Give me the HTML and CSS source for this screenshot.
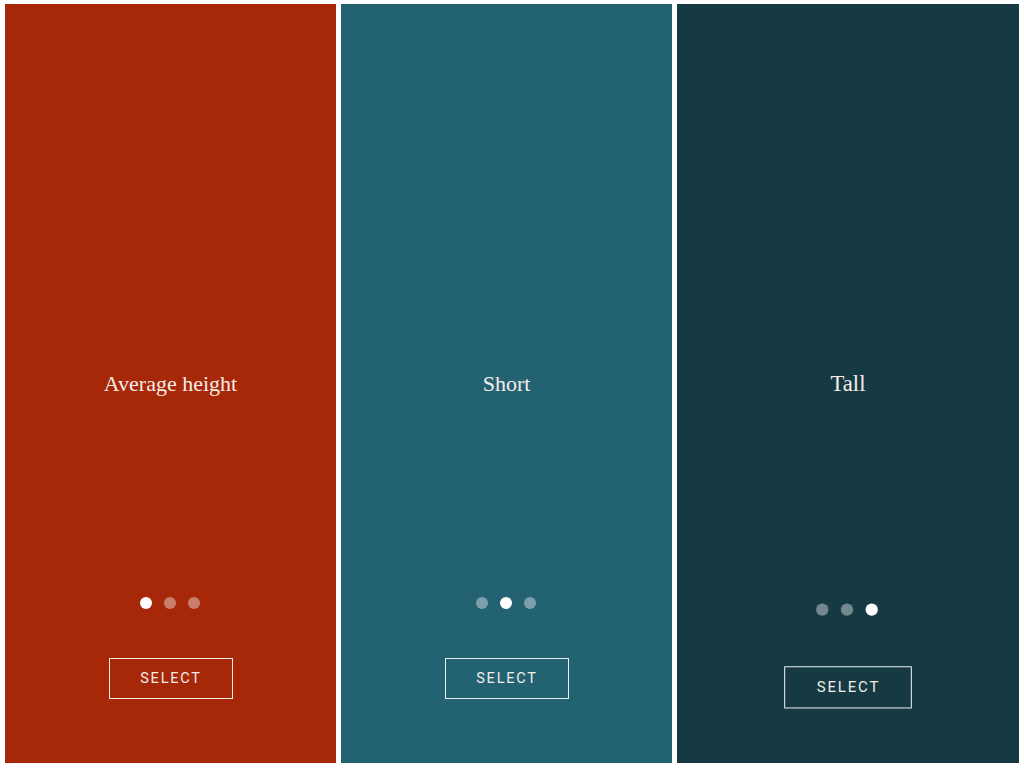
FILE: index.html
```html
<!DOCTYPE html>
<html>
<head>
<meta charset="utf-8">
<link rel="stylesheet" href="styles.css">
</head>
<body>
<div class="deck">
  <section class="panel panel-red">
    <div class="inner">
      <div class="top"></div>
      <h2 class="title">Average height</h2>
      <div class="bottom">
        <div class="dots"><span class="dot on"></span><span class="dot"></span><span class="dot"></span></div>
        <button class="select">SELECT</button>
      </div>
    </div>
  </section>
  <section class="panel panel-teal">
    <div class="inner">
      <div class="top"></div>
      <h2 class="title">Short</h2>
      <div class="bottom">
        <div class="dots"><span class="dot"></span><span class="dot on"></span><span class="dot"></span></div>
        <button class="select">SELECT</button>
      </div>
    </div>
  </section>
  <section class="panel panel-dark active">
    <div class="inner">
      <div class="top"></div>
      <h2 class="title">Tall</h2>
      <div class="bottom">
        <div class="dots"><span class="dot"></span><span class="dot"></span><span class="dot on"></span></div>
        <button class="select">SELECT</button>
      </div>
    </div>
  </section>
</div>
</body>
</html>
```
FILE: styles.css
```css
html, body {
  margin: 0;
  padding: 0;
  background: #ffffff;
}
.deck {
  display: flex;
  gap: 5px;
  padding: 4px 5px 5px 5px;
  height: 768px;
  box-sizing: border-box;
}
.panel {
  width: 331px;
  flex: 0 0 331px;
  height: 759px;
  overflow: hidden;
  color: #ffffff;
}
.panel.active {
  flex: 1 1 auto;
}
.panel-red { background: #a62809; }
.panel-teal { background: #236271; }
.panel-dark { background: #163a44; }
.inner {
  height: 100%;
  display: grid;
  grid-template-rows: 1fr auto 1fr;
}
.active .inner {
  transform: scale(1.03);
  transform-origin: 50% 50%;
}
.title {
  margin: 0;
  text-align: center;
  font-family: "Liberation Serif", "DejaVu Serif", serif;
  font-weight: normal;
  font-size: 22px;
  line-height: 30px;
  color: #f6ece8;
}
.bottom {
  display: flex;
  flex-direction: column;
  align-items: center;
  justify-content: flex-end;
  padding-bottom: 64px;
}
.dots {
  display: flex;
  gap: 12px;
  margin-bottom: 49px;
  margin-left: -2px;
}
.dot {
  width: 12px;
  height: 12px;
  border-radius: 50%;
  background: rgba(255, 255, 255, 0.4);
}
.dot.on {
  background: #ffffff;
}
.select {
  width: 124px;
  height: 41px;
  box-sizing: border-box;
  background: transparent;
  border: 1.5px solid rgba(255, 255, 255, 0.9);
  color: #f3ece9;
  font-family: Roboto, "Liberation Sans", sans-serif;
  font-size: 14.5px;
  letter-spacing: 1.8px;
  padding: 0 0 0 1px;
}
```
